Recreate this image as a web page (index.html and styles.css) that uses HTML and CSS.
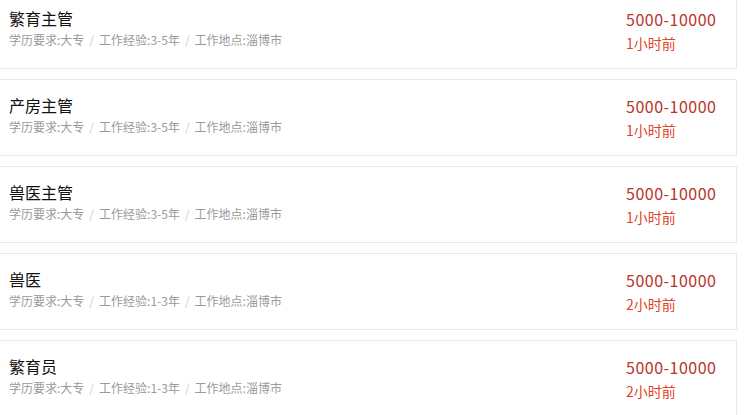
FILE: index.html
```html
<!DOCTYPE html>
<html lang="zh-CN">
<head>
    <meta charset="UTF-8">
    <title>职位列表</title>
    <link rel="stylesheet" href="styles.css">
</head>
<body>
    <div class="job-list">
        <div class="job-item">
            <div class="job-info">
                <div class="job-title">繁育主管</div>
                <div class="job-meta">学历要求:大专<span class="sep">/</span>工作经验:3-5年<span class="sep">/</span>工作地点:淄博市</div>
            </div>
            <div class="job-side">
                <div class="salary">5000-10000</div>
                <div class="time">1小时前</div>
            </div>
        </div>
        <div class="job-item">
            <div class="job-info">
                <div class="job-title">产房主管</div>
                <div class="job-meta">学历要求:大专<span class="sep">/</span>工作经验:3-5年<span class="sep">/</span>工作地点:淄博市</div>
            </div>
            <div class="job-side">
                <div class="salary">5000-10000</div>
                <div class="time">1小时前</div>
            </div>
        </div>
        <div class="job-item">
            <div class="job-info">
                <div class="job-title">兽医主管</div>
                <div class="job-meta">学历要求:大专<span class="sep">/</span>工作经验:3-5年<span class="sep">/</span>工作地点:淄博市</div>
            </div>
            <div class="job-side">
                <div class="salary">5000-10000</div>
                <div class="time">1小时前</div>
            </div>
        </div>
        <div class="job-item">
            <div class="job-info">
                <div class="job-title">兽医</div>
                <div class="job-meta">学历要求:大专<span class="sep">/</span>工作经验:1-3年<span class="sep">/</span>工作地点:淄博市</div>
            </div>
            <div class="job-side">
                <div class="salary">5000-10000</div>
                <div class="time">2小时前</div>
            </div>
        </div>
        <div class="job-item">
            <div class="job-info">
                <div class="job-title">繁育员</div>
                <div class="job-meta">学历要求:大专<span class="sep">/</span>工作经验:1-3年<span class="sep">/</span>工作地点:淄博市</div>
            </div>
            <div class="job-side">
                <div class="salary">5000-10000</div>
                <div class="time">2小时前</div>
            </div>
        </div>
    </div>
</body>
</html>
```

FILE: styles.css
```css
/* General */
body {
    margin: 0;
    background: #fff;
    font-family: "Microsoft YaHei", "Noto Sans CJK SC", sans-serif;
    overflow: hidden;
}

/* Job list */
.job-list {
    width: 739px;
    margin: -8px 0 0 -2px;
}

.job-item {
    display: flex;
    justify-content: space-between;
    align-items: flex-start;
    box-sizing: border-box;
    height: 77px;
    margin-bottom: 10px;
    padding: 13px 20px 0 10px;
    border: 1px solid #e8e8e8;
    background: #fff;
}

.job-title {
    font-size: 16px;
    line-height: 24px;
    color: #111;
}

.job-meta {
    font-size: 12px;
    line-height: 20px;
    color: #9a9a9a;
}

.job-meta .sep {
    color: #d0d0d0;
    margin: 0 5px;
}

/* Salary & time */
.job-side {
    width: 90px;
    padding-top: 1px;
    white-space: nowrap;
}

.salary {
    font-size: 16px;
    line-height: 24px;
    letter-spacing: 0.5px;
    color: #b9352b;
}

.time {
    font-size: 14px;
    line-height: 24px;
    color: #df4426;
}
```
